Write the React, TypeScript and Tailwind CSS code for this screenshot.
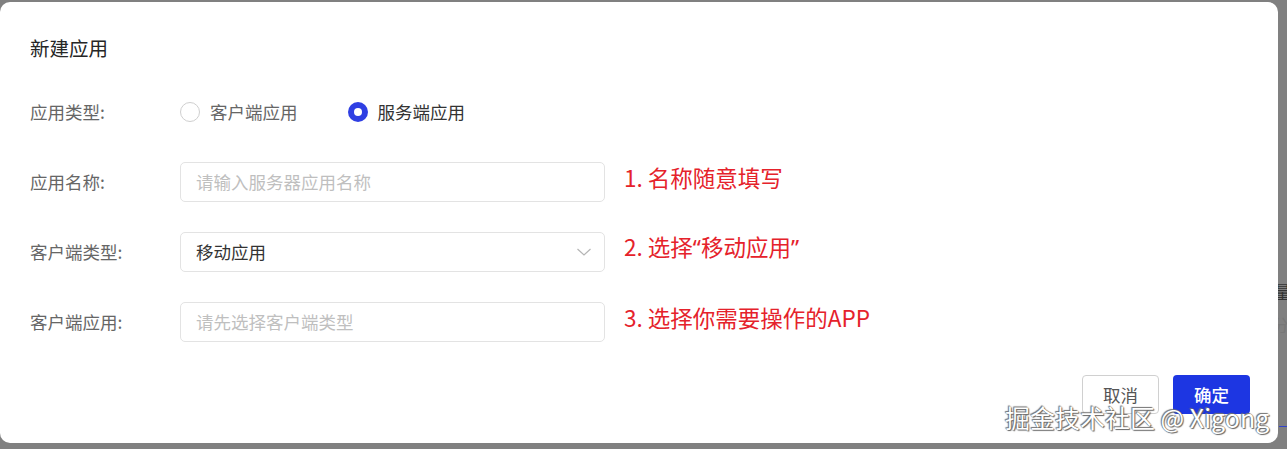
import React from "react";

const font = { fontFamily: '"Noto Sans CJK SC", "Noto Sans", sans-serif' };

function Radio({ checked, label }: { checked?: boolean; label: string }) {
  return (
    <div className="flex items-center gap-[10px]">
      {checked ? (
        <span className="flex h-[20px] w-[20px] items-center justify-center rounded-full bg-[#2f3fe3]">
          <span className="h-[8px] w-[8px] rounded-full bg-white" />
        </span>
      ) : (
        <span className="h-[20px] w-[20px] rounded-full border border-[#cfcfcf] bg-white" />
      )}
      <span className={checked ? "text-[#333]" : "text-[#666]"}>{label}</span>
    </div>
  );
}

function Row({ label, children, note }: { label: string; children: React.ReactNode; note?: React.ReactNode }) {
  return (
    <div className="flex h-[40px] items-center">
      <div className="w-[150px] shrink-0 text-[#666]">{label}</div>
      {children}
      {note && (
        <div className="mb-[9px] ml-[19px] whitespace-nowrap text-[22.5px] leading-none text-[#e5222b]">{note}</div>
      )}
    </div>
  );
}

const q = { fontFamily: '"Noto Sans", sans-serif' };

export default function App() {
  return (
    <div className="relative h-[449px] w-[1287px] overflow-hidden bg-[#808080]" style={font}>
      <div className="absolute right-0 top-[283px] w-[9px] overflow-hidden text-[17px] leading-none text-[#333]">
        <div className="-ml-[4px]">量</div>
        <div className="-ml-[6px] mt-[16px] text-[#777]">分</div>
      </div>
      <div className="absolute right-0 top-[426px] h-[1px] w-[8px] bg-[#3344cc]" />
      <div className="ml-0 mt-[2px] flex h-[441px] w-[1278px] flex-col rounded-[10px] bg-white px-[30px] pt-[32px] text-[17.5px] leading-[24px]">
        <div className="flex h-[28px] items-center text-[19.5px] text-[#262626]">新建应用</div>
        <div className="mt-[30px] flex flex-col gap-[30px]">
          <Row label="应用类型:">
            <div className="flex items-center gap-[50px]">
              <Radio label="客户端应用" />
              <Radio checked label="服务端应用" />
            </div>
          </Row>
          <Row label="应用名称:" note="1. 名称随意填写">
            <div className="flex h-[40px] w-[425px] items-center rounded-[5px] border border-[#e3e3e3] px-[15px] text-[#bfbfbf]">
              请输入服务器应用名称
            </div>
          </Row>
          <Row
            label="客户端类型:"
            note={
              <>
                2. 选择<span style={q}>“</span>移动应用<span style={q}>”</span>
              </>
            }
          >
            <div className="flex h-[40px] w-[425px] items-center justify-between rounded-[5px] border border-[#e3e3e3] pl-[15px] pr-[12px] text-[#333]">
              <span>移动应用</span>
              <svg width="16" height="10" viewBox="0 0 16 10" fill="none">
                <path d="M1.5 2 L8 8 L14.5 2" stroke="#b5b5b5" strokeWidth="1.2" />
              </svg>
            </div>
          </Row>
          <Row label="客户端应用:" note="3. 选择你需要操作的APP">
            <div className="flex h-[40px] w-[425px] items-center rounded-[5px] border border-[#e3e3e3] px-[15px] text-[#bfbfbf]">
              请先选择客户端类型
            </div>
          </Row>
        </div>
        <div className="mt-[33px] flex justify-end gap-[14px]">
          <div className="flex h-[39px] w-[77px] items-center justify-center rounded-[4px] border border-[#d0d0d0] text-[#555]">
            取消
          </div>
          <div className="mr-[-2px] flex h-[39px] w-[77px] items-center justify-center rounded-[4px] bg-[#1d36e2] font-medium text-white">
            确定
          </div>
        </div>
      </div>
      <div
        className="absolute left-[1005px] top-[401px] whitespace-nowrap text-[25px] leading-[32px] text-white"
        style={{ textShadow: "0 0 1px #555, 1px 1px 1px #666, -1px -1px 1px #777" }}
      >
        掘金技术社区 @ Xigong
      </div>
    </div>
  );
}
